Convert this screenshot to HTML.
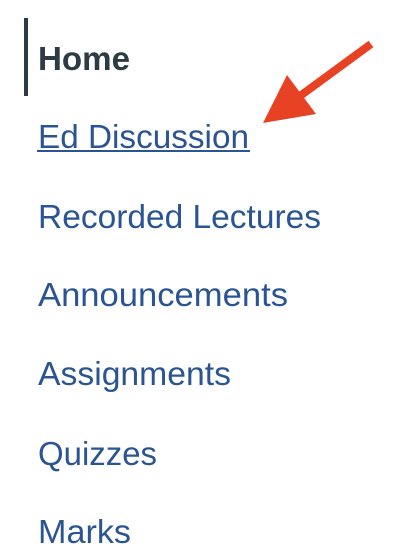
<!DOCTYPE html>
<html><head><style>
html,body{margin:0;padding:0;background:#fff;width:406px;height:558px;overflow:hidden}
</style></head><body>
<svg width="406" height="558" viewBox="0 0 406 558" xmlns="http://www.w3.org/2000/svg" style="display:block">
<rect x="0" y="0" width="406" height="558" fill="#fff"/>
<rect x="24" y="18" width="4" height="78" fill="#2d3b45"/>
<g font-family="Liberation Sans, sans-serif" font-size="33" lengthAdjust="spacingAndGlyphs">
<text x="38" y="70" fill="#2d3b45" font-weight="bold" textLength="92" lengthAdjust="spacingAndGlyphs">Home</text>
<text x="38" y="148" fill="#2b5592" textLength="211" lengthAdjust="spacingAndGlyphs">Ed Discussion</text>
<text x="38" y="228" fill="#2b5592" textLength="283" lengthAdjust="spacingAndGlyphs">Recorded Lectures</text>
<text x="38" y="306" fill="#2b5592" textLength="250" lengthAdjust="spacingAndGlyphs">Announcements</text>
<text x="38" y="385" fill="#2b5592" textLength="193" lengthAdjust="spacingAndGlyphs">Assignments</text>
<text x="38" y="465" fill="#2b5592" textLength="119" lengthAdjust="spacingAndGlyphs">Quizzes</text>
<text x="38" y="543" fill="#2b5592" textLength="93" lengthAdjust="spacingAndGlyphs">Marks</text>
</g>
<rect x="37" y="150" width="213" height="2" fill="#2b5592"/>
<line x1="371" y1="44" x2="300" y2="96" stroke="#e84224" stroke-width="8"/>
<polygon points="287,75 316,114 263,123" fill="#e84224"/>
</svg>
</body></html>
